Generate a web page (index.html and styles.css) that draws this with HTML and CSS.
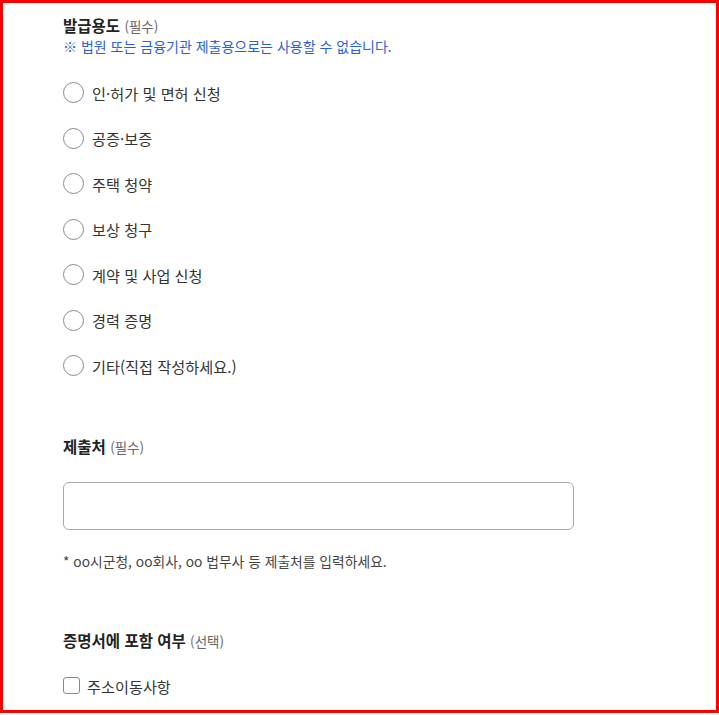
FILE: index.html
```html
<!DOCTYPE html>
<html lang="ko">
<head>
<meta charset="utf-8">
<link rel="stylesheet" href="styles.css">
</head>
<body>
<div class="frame">
  <section class="sec sec-purpose">
    <h2 class="title">발급용도 <span class="opt">(필수)</span></h2>
    <p class="notice">※ 법원 또는 금융기관 제출용으로는 사용할 수 없습니다.</p>
    <ul class="radios">
      <li class="radio"><span class="circle"></span><span class="lbl">인·허가 및 면허 신청</span></li>
      <li class="radio"><span class="circle"></span><span class="lbl">공증·보증</span></li>
      <li class="radio"><span class="circle"></span><span class="lbl">주택 청약</span></li>
      <li class="radio"><span class="circle"></span><span class="lbl">보상 청구</span></li>
      <li class="radio"><span class="circle"></span><span class="lbl">계약 및 사업 신청</span></li>
      <li class="radio"><span class="circle"></span><span class="lbl">경력 증명</span></li>
      <li class="radio"><span class="circle"></span><span class="lbl">기타(직접 작성하세요.)</span></li>
    </ul>
  </section>
  <section class="sec sec-dest">
    <h2 class="title">제출처 <span class="opt">(필수)</span></h2>
    <div class="input"></div>
    <p class="help">* oo시군청, oo회사, oo 법무사 등 제출처를 입력하세요.</p>
  </section>
  <section class="sec sec-incl">
    <h2 class="title">증명서에 포함 여부 <span class="opt">(선택)</span></h2>
    <div class="check"><span class="box"></span><span class="lbl">주소이동사항</span></div>
  </section>
</div>
</body>
</html>
```

FILE: styles.css
```css
* { box-sizing: border-box; }
html, body { margin: 0; padding: 0; background: #fff; }
body {
  font-family: "Noto Sans CJK KR", "Noto Sans", sans-serif;
  color: #333;
}
.frame {
  width: 719px;
  height: 713px;
  border: 3px solid #ff0000;
  padding: 11px 0 0 60px;
  overflow: hidden;
}
.sec { margin: 0; }
.title {
  margin: 0;
  font-size: 15.5px;
  line-height: 22px;
  font-weight: 700;
  color: #222;
}
.opt {
  font-size: 13.5px;
  font-weight: 400;
  color: #666;
}
.notice {
  margin: 0;
  font-size: 14px;
  line-height: 18px;
  color: #2c5fd3;
}
.radios {
  list-style: none;
  margin: 15px 0 0;
  padding: 0;
}
.radio {
  height: 45.5px;
  display: flex;
  align-items: center;
  gap: 8px;
}
.circle {
  width: 21px;
  height: 21px;
  border: 1px solid #8a8a8a;
  border-radius: 50%;
  flex: none;
}
.lbl {
  font-size: 15.2px;
  line-height: 20px;
  color: #333;
}
.sec-dest { margin-top: 46px; }
.input {
  margin-top: 24px;
  width: 511px;
  height: 48px;
  border: 1px solid #a9a9a9;
  border-radius: 6px;
}
.help {
  margin: 22px 0 0;
  font-size: 13.8px;
  line-height: 18px;
  color: #444;
}
.sec-incl { margin-top: 59px; }
.check {
  margin-top: 24px;
  display: flex;
  align-items: center;
  gap: 7px;
  height: 20px;
}
.box {
  width: 17px;
  height: 17px;
  border: 1px solid #8a8a8a;
  border-radius: 3px;
  flex: none;
}
```
